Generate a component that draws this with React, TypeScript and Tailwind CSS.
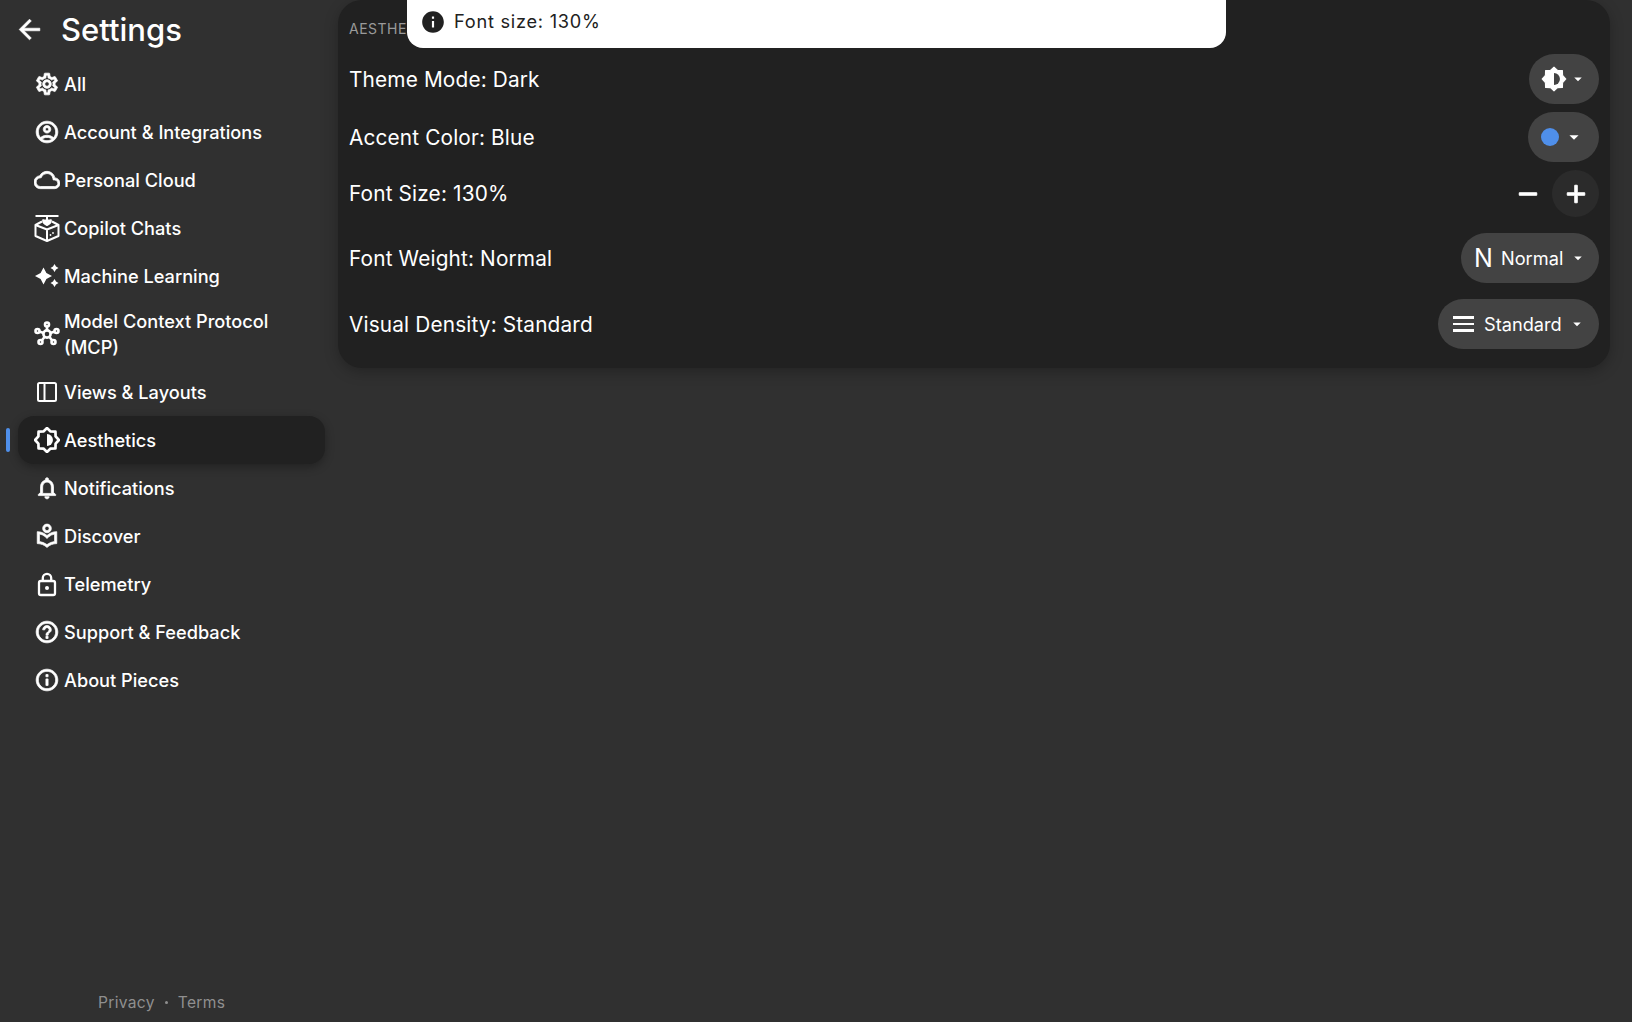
import { ReactNode } from 'react';
import {
  MdArrowBack,
  MdOutlineSettings,
  MdOutlineAccountCircle,
  MdOutlineCloud,
  MdOutlineNotifications,
  MdOutlineLocalLibrary,
  MdOutlineHelpOutline,
  MdOutlineInfo,
  MdInfo,
  MdArrowDropDown,
  MdAdd,
  MdRemove,
} from 'react-icons/md';

// 8-pointed badge outline shared by the nav icon and the theme pill
const starPoints = Array.from({ length: 16 }, (_, i) => {
  const r = i % 2 === 0 ? 11 : 8.6;
  const a = (i * Math.PI) / 8 - Math.PI / 2;
  return `${12 + r * Math.cos(a)},${12 + r * Math.sin(a)}`;
}).join(' ');

function BadgeOutline() {
  return (
    <svg width="26" height="26" viewBox="0 0 24 24" fill="none">
      <polygon points={starPoints} stroke="white" strokeWidth="2.5" strokeLinejoin="round" />
      <path d="M12 6.5a5.5 5.5 0 0 1 0 11z" fill="white" />
    </svg>
  );
}

function BadgeFilled() {
  return (
    <svg width="26" height="26" viewBox="0 0 24 24">
      <polygon points={starPoints} fill="white" stroke="white" strokeLinejoin="round" />
      <path d="M12 6.5a5.5 5.5 0 0 1 0 11z" fill="#434343" />
    </svg>
  );
}

function PanelIcon() {
  return (
    <svg width="26" height="26" viewBox="0 0 26 26" fill="none" stroke="white" strokeWidth="2">
      <rect x="4" y="4" width="18" height="18" rx="1.5" />
      <path d="M10.5 4v18" />
    </svg>
  );
}

function HubIcon() {
  const outer = [
    [13, 3.5],
    [3.5, 10],
    [22.5, 10],
    [6.5, 21],
    [19.5, 21],
  ];
  return (
    <svg width="28" height="28" viewBox="0 0 26 26" fill="none" stroke="white" strokeWidth="2.6">
      {outer.map(([x, y], i) => (
        <g key={i}>
          <path d={`M13 13L${x} ${y}`} />
          <circle cx={x} cy={y} r="2" fill="#303030" />
        </g>
      ))}
      <circle cx="13" cy="13" r="3.6" fill="#303030" />
    </svg>
  );
}

function DroneBoxIcon() {
  return (
    <svg width="26" height="28" viewBox="0 0 26 28" fill="none" stroke="white" strokeWidth="2" strokeLinejoin="round">
      <path d="M1.5 2h23" />
      <path d="M13 2v6" />
      <path d="M9 5.5c0 2.5 1.5 4.5 4 5.5 2.5-1 4-3 4-5.5" fill="white" stroke="white" />
      <path d="M8 7.5L1.5 11v11L13 27l11.5-5V11L18 7.5" />
      <path d="M1.5 11L13 15.5 24.5 11M13 15.5V27" />
      <circle cx="19" cy="19" r="0.9" fill="white" stroke="none" />
      <circle cx="16.5" cy="21" r="0.9" fill="white" stroke="none" />
    </svg>
  );
}

function SparkIcon() {
  return (
    <svg width="26" height="26" viewBox="0 0 26 26" fill="white">
      <path d="M9.5 4.5L12.4 10.1 18 13 12.4 15.9 9.5 21.5 6.6 15.9 1 13 6.6 10.1z" />
      <path d="M20.5 1L22 3.5 24.5 5 22 6.5 20.5 9 19 6.5 16.5 5 19 3.5z" />
      <path d="M20.5 16L22 18.5 24.5 20 22 21.5 20.5 24 19 21.5 16.5 20 19 18.5z" />
    </svg>
  );
}

function LockIcon() {
  return (
    <svg width="26" height="26" viewBox="0 0 26 26" fill="none" stroke="white" strokeWidth="2.3">
      <rect x="5" y="10" width="16" height="14" rx="1.8" />
      <path d="M8.8 10V7a4.2 4.2 0 0 1 8.4 0v3" />
      <circle cx="13" cy="17" r="2" fill="white" stroke="none" />
    </svg>
  );
}

const thick = { stroke: 'currentColor', strokeWidth: 0.7 };

type NavItem = { label: string; icon: ReactNode; tall?: boolean; active?: boolean };

const navItems: NavItem[] = [
  { label: 'All', icon: <MdOutlineSettings size={26} {...thick} /> },
  { label: 'Account & Integrations', icon: <MdOutlineAccountCircle size={26} {...thick} /> },
  { label: 'Personal Cloud', icon: <MdOutlineCloud size={30} {...thick} /> },
  { label: 'Copilot Chats', icon: <DroneBoxIcon /> },
  { label: 'Machine Learning', icon: <SparkIcon /> },
  { label: 'Model Context Protocol (MCP)', icon: <HubIcon />, tall: true },
  { label: 'Views & Layouts', icon: <PanelIcon /> },
  { label: 'Aesthetics', icon: <BadgeOutline />, active: true },
  { label: 'Notifications', icon: <MdOutlineNotifications size={26} {...thick} /> },
  { label: 'Discover', icon: <MdOutlineLocalLibrary size={26} {...thick} /> },
  { label: 'Telemetry', icon: <LockIcon /> },
  { label: 'Support & Feedback', icon: <MdOutlineHelpOutline size={26} {...thick} /> },
  { label: 'About Pieces', icon: <MdOutlineInfo size={26} {...thick} /> },
];

function Pill({ children, className }: { children: ReactNode; className: string }) {
  return (
    <div className={`flex h-[50px] items-center rounded-[25px] bg-[#434343] text-[18.2px] text-white ${className}`}>
      {children}
    </div>
  );
}

function Caret({ size = 18 }: { size?: number }) {
  return (
    <span className="flex w-[22px] shrink-0 justify-center">
      <MdArrowDropDown size={size} className="text-white" />
    </span>
  );
}

function SettingRow({ label, children, className }: { label: string; children: ReactNode; className: string }) {
  return (
    <div className={`flex items-center justify-between ${className}`}>
      <span className="text-[20.8px] tracking-[0.15px] text-white">{label}</span>
      {children}
    </div>
  );
}

export default function App() {
  return (
    <div className="relative flex h-[1022px] w-[1632px] overflow-hidden bg-[#303030] font-['Inter',sans-serif] [&_path[fill='none']]:stroke-none">
      <aside className="flex w-[338px] shrink-0 flex-col pl-[18px]">
        <header className="flex h-[58px] items-center">
          <MdArrowBack size={31} className="-ml-1 text-white" stroke="currentColor" strokeWidth={0.5} />
          <h1 className="ml-4 text-[31px] leading-none font-medium text-white">Settings</h1>
        </header>
        <nav className="mt-[2px] flex w-[307px] flex-col">
          {navItems.map((item) => (
            <div
              key={item.label}
              className={`relative flex items-center rounded-[16px] pl-4 text-[18.2px] leading-[26px] font-[450] text-white ${
                item.tall ? 'h-[68px]' : 'h-12'
              } ${item.active ? 'bg-[#212121] shadow-[0_3px_10px_rgba(0,0,0,0.3)]' : ''}`}
            >
              {item.active && (
                <span className="absolute top-3 -left-3 h-6 w-1 rounded-sm bg-[#4f8fea]" />
              )}
              <span className="flex w-[26px] shrink-0 items-center justify-center text-white">{item.icon}</span>
              <span className="ml-1">{item.label}</span>
            </div>
          ))}
        </nav>
        <footer className="mt-auto mb-2 flex items-center pl-[80px] text-[15.6px] tracking-[0.3px] text-[#8f8f8f]">
          <span>Privacy</span>
          <span className="mx-[10px] size-[3px] rounded-full bg-[#8f8f8f]" />
          <span>Terms</span>
        </footer>
      </aside>

      <main className="flex-1 pr-[22px]">
        <section className="flex h-[368px] flex-col rounded-[24px] bg-[#212121] pr-[11px] pl-[11px] shadow-[0_4px_14px_rgba(0,0,0,0.25)]">
          <div className="flex h-[54px] items-center pt-[2px] text-[14px] tracking-[0.5px] text-[#9a9a9a]">AESTHETICS</div>
          <SettingRow label="Theme Mode: Dark" className="h-[50px] [&>span:first-child]:pt-[2px]">
            <Pill className="w-[70px] pl-[12px]">
              <BadgeFilled />
              <Caret />
            </Pill>
          </SettingRow>
          <SettingRow label="Accent Color: Blue" className="mt-2 h-[50px] [&>span:first-child]:pt-[2px]">
            <Pill className="w-[71px] pl-[13px]">
              <span className="size-[18px] rounded-full bg-[#4f8fea]" />
              <span className="ml-[4px]">
                <Caret size={22} />
              </span>
            </Pill>
          </SettingRow>
          <SettingRow label="Font Size: 130%" className="mt-2 h-[47px]">
            <div className="flex items-center">
              <MdRemove size={30} className="mr-[9px] text-white" stroke="currentColor" strokeWidth={0.8} />
              <div className="flex size-[47px] items-center justify-center rounded-full bg-[#2b2b2b]">
                <MdAdd size={30} className="text-white" stroke="currentColor" strokeWidth={0.8} />
              </div>
            </div>
          </SettingRow>
          <SettingRow label="Font Weight: Normal" className="mt-4 h-[50px] [&>span:first-child]:pt-[2px]">
            <Pill className="w-[138px] pl-[13px]">
              <span className="w-[16px] text-[25px] leading-none font-normal">N</span>
              <span className="ml-[11px] pt-[2px]">Normal</span>
              <span className="ml-[4px]">
                <Caret />
              </span>
            </Pill>
          </SettingRow>
          <SettingRow label="Visual Density: Standard" className="mt-4 h-[50px] [&>span:first-child]:pt-[2px]">
            <Pill className="w-[161px] pl-[15px]">
              <span className="flex w-[21px] flex-col gap-[4px]">
                <span className="h-[2.5px] bg-white" />
                <span className="h-[2.5px] bg-white" />
                <span className="h-[2.5px] bg-white" />
              </span>
              <span className="ml-[10px] pt-[2px]">Standard</span>
              <span className="ml-[4px]">
                <Caret />
              </span>
            </Pill>
          </SettingRow>
        </section>
      </main>

      <div className="absolute top-0 left-[407px] flex h-12 w-[819px] items-center rounded-b-[16px] bg-white pb-1 pl-[13px] text-[18.2px] tracking-[0.75px] text-[#212121]">
        <MdInfo size={26} className="text-[#212121]" />
        <span className="ml-[8px]">Font size: 130%</span>
      </div>
    </div>
  );
}
